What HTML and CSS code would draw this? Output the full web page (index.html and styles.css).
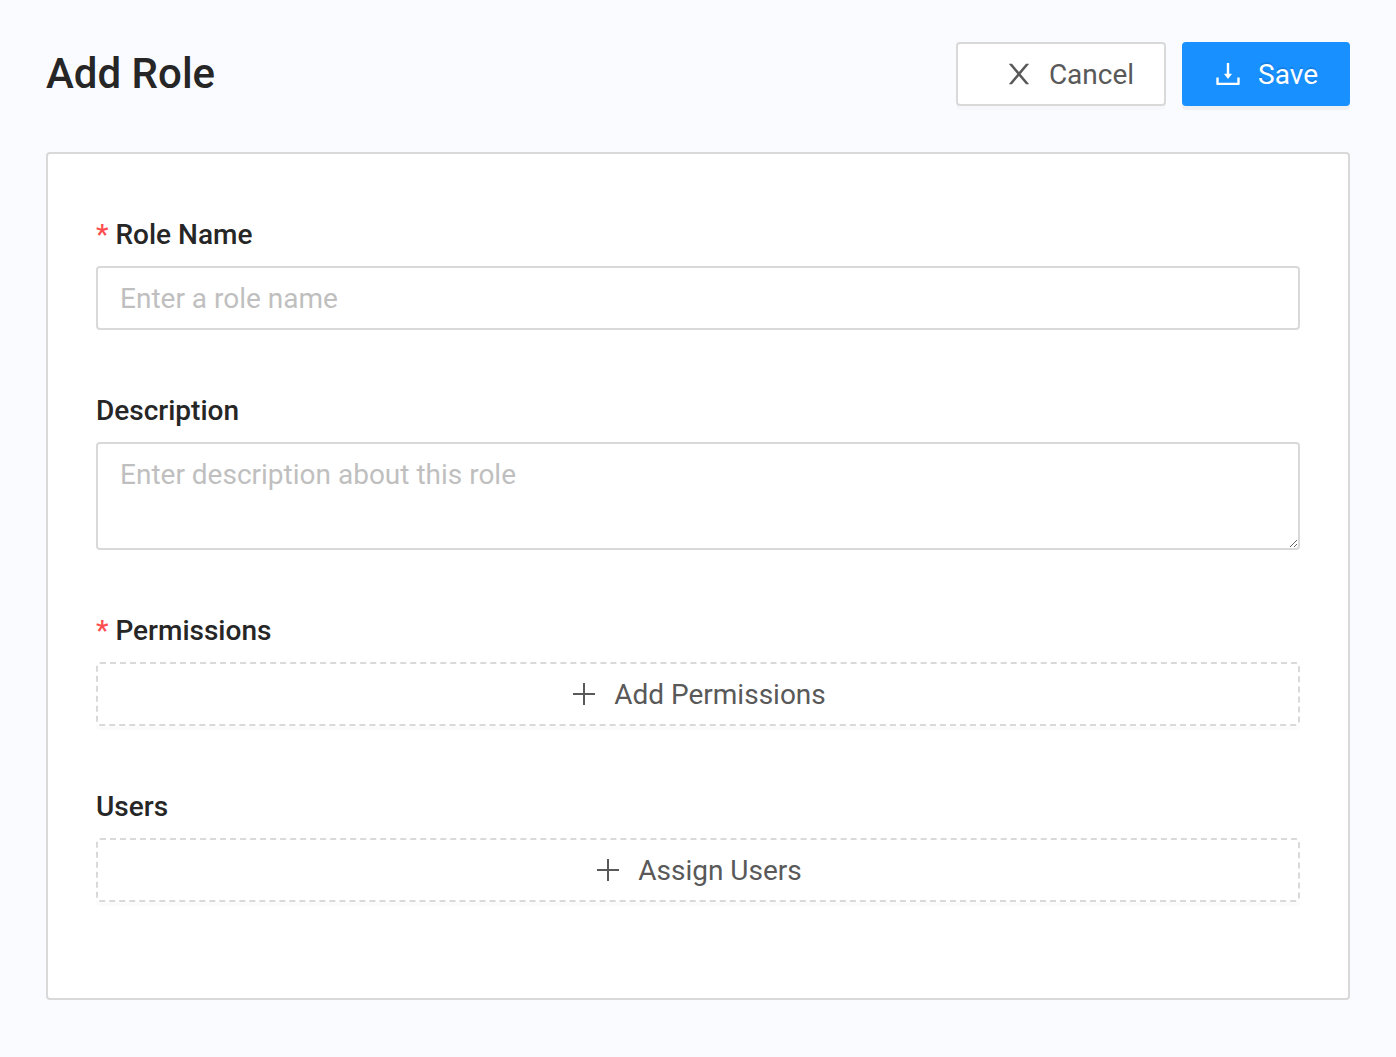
FILE: index.html
```html
<!DOCTYPE html>
<html lang="en">
<head>
<meta charset="utf-8">
<meta name="viewport" content="width=device-width, initial-scale=1">
<title>Add Role</title>
<link rel="stylesheet" href="styles.css">
</head>
<body>
<main class="page">
  <header class="page-header">
    <h1 class="page-title">Add Role</h1>
    <div class="actions">
      <button class="btn btn-cancel" type="button">
        <svg class="icon" viewBox="0 0 1024 1024" aria-hidden="true"><path d="M563.8 512l262.5-312.9c4.4-5.2.7-13.1-6.1-13.1h-79.8c-4.7 0-9.2 2.1-12.3 5.7L511.6 449.8 295.1 191.7c-3-3.6-7.5-5.7-12.3-5.7H203c-6.8 0-10.5 7.9-6.1 13.1L459.4 512 196.9 824.9A7.95 7.95 0 00203 838h79.8c4.7 0 9.2-2.1 12.3-5.7l216.5-258.1 216.5 258.1c3 3.6 7.5 5.7 12.3 5.7h79.8c6.8 0 10.5-7.9 6.1-13.1L563.8 512z"/></svg>
        <span class="btn-text">Cancel</span>
      </button>
      <button class="btn btn-primary" type="submit" form="role-form">
        <svg class="icon" viewBox="0 0 1024 1024" aria-hidden="true"><path d="M505.7 661a8 8 0 0012.6 0l112-141.7c4.1-5.2.4-12.9-6.3-12.9h-74.1V168c0-4.4-3.6-8-8-8h-60c-4.4 0-8 3.6-8 8v338.3H400c-6.7 0-10.4 7.7-6.3 12.9l112 141.8zM878 626h-60c-4.4 0-8 3.6-8 8v154H214V634c0-4.4-3.6-8-8-8h-60c-4.4 0-8 3.6-8 8v198c0 17.7 14.3 32 32 32h684c17.7 0 32-14.3 32-32V634c0-4.4-3.6-8-8-8z"/></svg>
        <span class="btn-text">Save</span>
      </button>
    </div>
  </header>

  <form class="card" id="role-form">
    <div class="field">
      <label class="label required" for="role-name">Role Name</label>
      <input class="control" id="role-name" type="text" placeholder="Enter a role name">
    </div>
    <div class="field">
      <label class="label" for="description">Description</label>
      <textarea class="control control-area" id="description" placeholder="Enter description about this role"></textarea>
    </div>
    <div class="field">
      <label class="label required" for="permissions">Permissions</label>
      <button class="btn btn-dashed" id="permissions" type="button">
        <svg class="icon" viewBox="0 0 32 32" aria-hidden="true"><path d="M15 5h2v22h-2zM5 15h22v2H5z"/></svg>
        <span class="btn-text">Add Permissions</span>
      </button>
    </div>
    <div class="field">
      <label class="label" for="users">Users</label>
      <button class="btn btn-dashed" id="users" type="button">
        <svg class="icon" viewBox="0 0 32 32" aria-hidden="true"><path d="M15 5h2v22h-2zM5 15h22v2H5z"/></svg>
        <span class="btn-text">Assign Users</span>
      </button>
    </div>
  </form>
</main>
</body>
</html>
```
FILE: styles.css
```css
* {
  box-sizing: border-box;
}

body {
  margin: 0;
  background: #fafbff;
  color: #262626;
  font-family: Roboto, "Liberation Sans", sans-serif;
  font-size: 28px;
  line-height: 34px;
}

.page {
  padding: 42px 46px 56px;
}

.page-header {
  display: flex;
  align-items: center;
  justify-content: space-between;
  margin-bottom: 46px;
}

.page-title {
  margin: 0;
  font-size: 42px;
  font-weight: 500;
  line-height: 64px;
}

.actions {
  display: flex;
  gap: 16px;
}

.btn {
  display: flex;
  align-items: center;
  justify-content: center;
  gap: 14px;
  height: 64px;
  padding: 0 30px;
  border: 2px solid #d9d9d9;
  border-radius: 4px;
  background: #fff;
  box-shadow: 0 4px 0 rgba(0, 0, 0, 0.016);
  color: #595959;
  font: inherit;
  cursor: pointer;
}

.btn-text {
  padding-top: 2px;
}

.btn-cancel {
  padding-left: 45px;
}

.btn-primary {
  padding-left: 28px;
  border-color: #1890ff;
  background: #1890ff;
  box-shadow: 0 4px 0 rgba(0, 0, 0, 0.043);
  color: #fff;
  text-shadow: 0 -2px 0 rgba(0, 0, 0, 0.12);
}

.btn-dashed {
  width: 100%;
  padding-right: 32px;
  border-style: dashed;
}

.icon {
  flex: none;
  width: 32px;
  height: 32px;
  fill: currentColor;
}

.card {
  display: flex;
  flex-direction: column;
  gap: 64px;
  padding: 64px 48px 96px;
  border: 2px solid #d9d9d9;
  border-radius: 4px;
  background: #fff;
}

.field {
  display: flex;
  flex-direction: column;
  align-items: stretch;
  gap: 14px;
}

.label {
  font-weight: 500;
}

.required::before {
  content: "*";
  margin-right: 7px;
  color: #ff4d4f;
}

.control {
  display: block;
  width: 100%;
  height: 64px;
  padding: 8px 22px;
  border: 2px solid #d9d9d9;
  border-radius: 4px;
  background: #fff;
  color: #595959;
  font: inherit;
  line-height: 44px;
}

.control::placeholder {
  color: #bfbfbf;
  opacity: 1;
}

.control-area {
  height: 108px;
  line-height: 46px;
  resize: vertical;
}
```
